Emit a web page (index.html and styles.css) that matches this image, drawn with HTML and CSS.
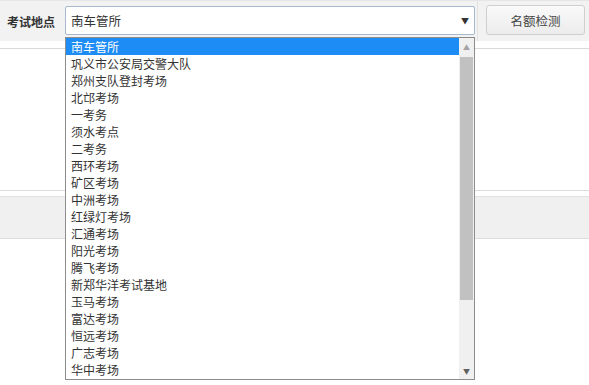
FILE: index.html
```html
<!DOCTYPE html>
<html>
<head>
<meta charset="utf-8">
<link rel="stylesheet" href="styles.css">
</head>
<body>
<div class="page">
  <div class="toolbar">
    <div class="cell label-cell"><span class="label">考试地点</span></div>
    <div class="cell select-cell">
      <div class="select"><span class="select-text">南车管所</span><span class="select-arrow">▼</span></div>
    </div>
    <div class="cell button-cell"><button class="btn">名额检测</button></div>
  </div>
  <div class="subrow"></div>
  <div class="spacer"></div>
  <div class="band-gap"></div>
  <div class="band"></div>

  <div class="dropdown">
    <ul class="options">
      <li class="selected">南车管所</li>
      <li>巩义市公安局交警大队</li>
      <li>郑州支队登封考场</li>
      <li>北邙考场</li>
      <li>一考务</li>
      <li>须水考点</li>
      <li>二考务</li>
      <li>西环考场</li>
      <li>矿区考场</li>
      <li>中洲考场</li>
      <li>红绿灯考场</li>
      <li>汇通考场</li>
      <li>阳光考场</li>
      <li>腾飞考场</li>
      <li>新郑华洋考试基地</li>
      <li>玉马考场</li>
      <li>富达考场</li>
      <li>恒远考场</li>
      <li>广志考场</li>
      <li>华中考场</li>
    </ul>
    <div class="scrollbar">
      <div class="sb-arrow up">▲</div>
      <div class="sb-track"><div class="sb-thumb"></div></div>
      <div class="sb-arrow down">▼</div>
    </div>
  </div>
</div>
</body>
</html>
```
FILE: styles.css
```css
* { box-sizing: border-box; }
html, body { margin: 0; padding: 0; background: #fff; }
body {
  font-family: "Noto Sans CJK SC", "Liberation Sans", sans-serif;
  font-size: 12px;
  color: #333;
  width: 589px;
  height: 385px;
  overflow: hidden;
}
.page { position: relative; width: 589px; height: 385px; }

.toolbar {
  display: flex;
  height: 41px;
  background: #f2f2f2;
  border-top: 1px solid #e6e6e6;
}
.cell { display: flex; align-items: center; }
.label-cell { width: 65px; padding-left: 7px; }
.label { font-weight: bold; color: #333; font-size: 12px; }
.select-cell { width: 413px; border-right: 1px solid #e2e2e2; padding-bottom: 2px; }
.select {
  width: 410px;
  height: 29px;
  background: #fff;
  border: 1px solid #a8b8cf;
  border-radius: 2px;
  display: flex;
  align-items: center;
  justify-content: space-between;
  padding: 0 5px;
}
.select-text { font-size: 12.5px; color: #333; }
.select-arrow { font-size: 8px; color: #333; }
.button-cell { flex: 1; padding-left: 8px; padding-bottom: 2px; }
.btn {
  width: 99px;
  height: 30px;
  border: 1px solid #cfcfcf;
  border-radius: 3px;
  background: linear-gradient(#fafafa, #ececec);
  font-family: inherit;
  font-size: 12.5px;
  color: #444;
  padding: 0;
}
.subrow { height: 8px; border-bottom: 1px solid #d9d9d9; }
.spacer { height: 142px; border-bottom: 1px solid #dcdcdc; }
.band-gap { height: 5px; }
.band { height: 43px; background: #f0f0f0; border-top: 1px solid #e2e2e2; border-bottom: 1px solid #dedede; }

.dropdown {
  position: absolute;
  left: 65px;
  top: 37px;
  width: 410px;
  height: 343px;
  background: #fff;
  border: 1px solid #8d8d8d;
  display: flex;
}
.options {
  list-style: none;
  margin: 0;
  padding: 0;
  flex: 1;
}
.options li {
  height: 17px;
  line-height: 17px;
  padding-left: 5px;
  font-size: 12px;
  color: #333;
  white-space: nowrap;
}
.options li.selected { background: #1e8cf5; color: #fff; }
.scrollbar {
  width: 15px;
  background: #f0f0f0;
  display: flex;
  flex-direction: column;
}
.sb-arrow {
  height: 17px;
  font-size: 7px;
  color: #606060;
  display: flex;
  align-items: center;
  justify-content: center;
}
.sb-arrow.up { color: #a3a3a3; }
.sb-track { flex: 1; padding: 2px 1px 0 1px; }
.sb-thumb { height: 243px; background: #c1c1c1; }
```
